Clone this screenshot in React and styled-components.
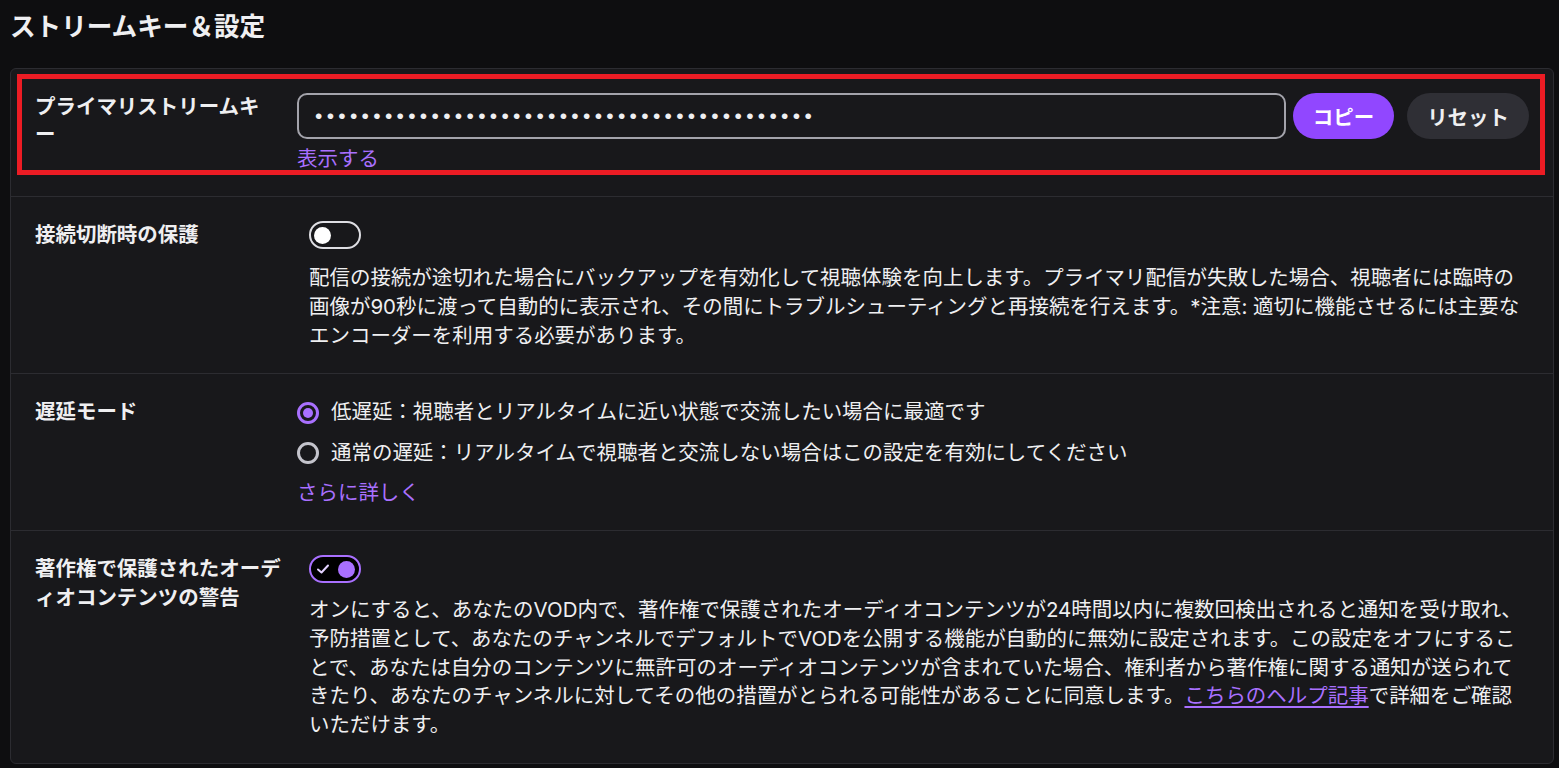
import styled, { createGlobalStyle } from 'styled-components';

const GlobalStyle = createGlobalStyle`
	html, body {
		margin: 0;
		background: #0e0e10;
	}
	body {
		font-family: "Inter", "Noto Sans CJK JP", sans-serif;
		color: #efeff1;
	}
`;

const DOTS = '•'.repeat(43);

export default function App() {
	return (
		<>
			<GlobalStyle />
			<Page>
				<Title>ストリームキー＆設定</Title>
				<Card>
					<Row>
						<Highlight />
						<Label>
							プライマリストリームキ
							<br />ー
						</Label>
						<Field>
							<KeyLine>
								<KeyInput type="text" readOnly value={DOTS} />
								<PillButton $primary>コピー</PillButton>
								<PillButton $spaced>リセット</PillButton>
							</KeyLine>
							<TextLink href="#" $top={6}>
								表示する
							</TextLink>
						</Field>
					</Row>

					<Row>
						<Label>接続切断時の保護</Label>
						<ToggleField>
							<Toggle>
								<Knob />
							</Toggle>
							<Description $top={15}>
								配信の接続が途切れた場合にバックアップを有効化して視聴体験を向上します。プライマリ配信が失敗した場合、視聴者には臨時の
								<br />
								画像が90秒に渡って自動的に表示され、その間にトラブルシューティングと再接続を行えます。*注意: 適切に機能させるには主要な
								<br />
								エンコーダーを利用する必要があります。
							</Description>
						</ToggleField>
					</Row>

					<Row>
						<Label>遅延モード</Label>
						<Field>
							<RadioItem>
								<RadioMark $on>
									<RadioDot />
								</RadioMark>
								低遅延：視聴者とリアルタイムに近い状態で交流したい場合に最適です
							</RadioItem>
							<RadioItem>
								<RadioMark />
								通常の遅延：リアルタイムで視聴者と交流しない場合はこの設定を有効にしてください
							</RadioItem>
							<TextLink href="#" $top={11}>
								さらに詳しく
							</TextLink>
						</Field>
					</Row>

					<Row>
						<Label>
							著作権で保護されたオーデ
							<br />
							ィオコンテンツの警告
						</Label>
						<ToggleField>
							<Toggle $on>
								<svg width="14" height="12" viewBox="0 0 14 12">
									<path d="M2 6.5 L5.5 9.5 L12 2.5" fill="none" stroke="#e4d3ff" strokeWidth="2" strokeLinecap="round" strokeLinejoin="round" />
								</svg>
								<Knob $on />
							</Toggle>
							<Description $top={13}>
								オンにすると、あなたのVOD内で、著作権で保護されたオーディオコンテンツが24時間以内に複数回検出されると通知を受け取れ、
								<br />
								予防措置として、あなたのチャンネルでデフォルトでVODを公開する機能が自動的に無効に設定されます。この設定をオフにするこ
								<br />
								とで、あなたは自分のコンテンツに無許可のオーディオコンテンツが含まれていた場合、権利者から著作権に関する通知が送られて
								<br />
								きたり、あなたのチャンネルに対してその他の措置がとられる可能性があることに同意します。
								<HelpLink href="#">こちらのヘルプ記事</HelpLink>で詳細をご確認
								<br />
								いただけます。
							</Description>
						</ToggleField>
					</Row>
				</Card>
			</Page>
		</>
	);
}

const Page = styled.div`
	padding: 12px 5px 0 10px;
`;

const Title = styled.h1`
	margin: 0 0 25px;
	font-size: 25.6px;
	font-weight: 700;
	line-height: 1.2;
	color: #efeff1;
`;

const Card = styled.div`
	background-color: #18181b;
	border: 1px solid #2c2c31;
	border-radius: 6px;
`;

const Row = styled.div`
	position: relative;
	display: grid;
	grid-template-columns: 262px 1fr;
	padding: 24px 24px 23px;

	& + & {
		border-top: 1px solid #2c2c31;
	}
`;

const Highlight = styled.div`
	position: absolute;
	left: 6px;
	top: 5px;
	width: 1528px;
	height: 101px;
	box-sizing: border-box;
	border: 5px solid #ec1c24;
	pointer-events: none;
`;

const Label = styled.div`
	font-size: 20.48px;
	font-weight: 700;
	line-height: 1.4;
	color: #efeff1;
`;

const Field = styled.div`
	display: flex;
	flex-direction: column;
	align-items: flex-start;
	min-width: 0;
`;

const ToggleField = styled(Field)`
	padding-left: 12px;
`;

const KeyLine = styled.div`
	display: flex;
	align-items: center;
	gap: 7px;
	align-self: stretch;
`;

const KeyInput = styled.input`
	flex: 1;
	min-width: 0;
	height: 46px;
	box-sizing: border-box;
	border: 2px solid #a3a3ab;
	border-radius: 10px;
	background: transparent;
	color: #efeff1;
	font-family: "Liberation Sans", sans-serif;
	font-size: 21px;
	letter-spacing: 4.3px;
	padding: 0 16px;
	outline: none;
`;

const PillButton = styled.button`
	height: 46px;
	border: 0;
	border-radius: 23px;
	padding: 0 20px;
	margin-left: ${(p) => (p.$spaced ? '6px' : '0')};
	background-color: ${(p) => (p.$primary ? '#9147ff' : '#2f2f35')};
	color: ${(p) => (p.$primary ? '#ffffff' : '#efeff1')};
	font-family: inherit;
	font-size: 20.48px;
	font-weight: 700;
	white-space: nowrap;
	cursor: pointer;
`;

const TextLink = styled.a`
	margin-top: ${(p) => p.$top || 0}px;
	font-size: 20.48px;
	line-height: 1.4;
	color: #a970ff;
	text-decoration: none;
`;

const Toggle = styled.div`
	width: 52px;
	height: 28px;
	box-sizing: border-box;
	border: 2px solid ${(p) => (p.$on ? '#a970ff' : '#dedee3')};
	border-radius: 14px;
	background-color: ${(p) => (p.$on ? '#000000' : 'transparent')};
	display: flex;
	align-items: center;
	justify-content: ${(p) => (p.$on ? 'space-between' : 'flex-start')};
	padding: 0 4px 0 ${(p) => (p.$on ? '5px' : '3px')};

	svg {
		display: block;
	}
`;

const Knob = styled.span`
	width: 17px;
	height: 17px;
	border-radius: 50%;
	background-color: ${(p) => (p.$on ? '#a970ff' : '#ffffff')};
`;

const Description = styled.p`
	margin: ${(p) => p.$top}px 0 0;
	font-size: 20.48px;
	line-height: 1.4;
	white-space: nowrap;
	color: #efeff1;
`;

const RadioItem = styled.label`
	display: flex;
	align-items: center;
	gap: 12px;
	font-size: 20.48px;
	line-height: 1.4;
	color: #efeff1;

	& + & {
		margin-top: 12px;
	}
`;

const RadioMark = styled.span`
	width: 22px;
	height: 22px;
	box-sizing: border-box;
	border-radius: 50%;
	border: 3px solid ${(p) => (p.$on ? '#a970ff' : '#c4c4cc')};
	display: flex;
	align-items: center;
	justify-content: center;
	flex-shrink: 0;
`;

const RadioDot = styled.span`
	width: 10px;
	height: 10px;
	border-radius: 50%;
	background-color: #a970ff;
`;

const HelpLink = styled.a`
	color: #a970ff;
	text-decoration: underline;
	text-underline-offset: 3px;
`;
